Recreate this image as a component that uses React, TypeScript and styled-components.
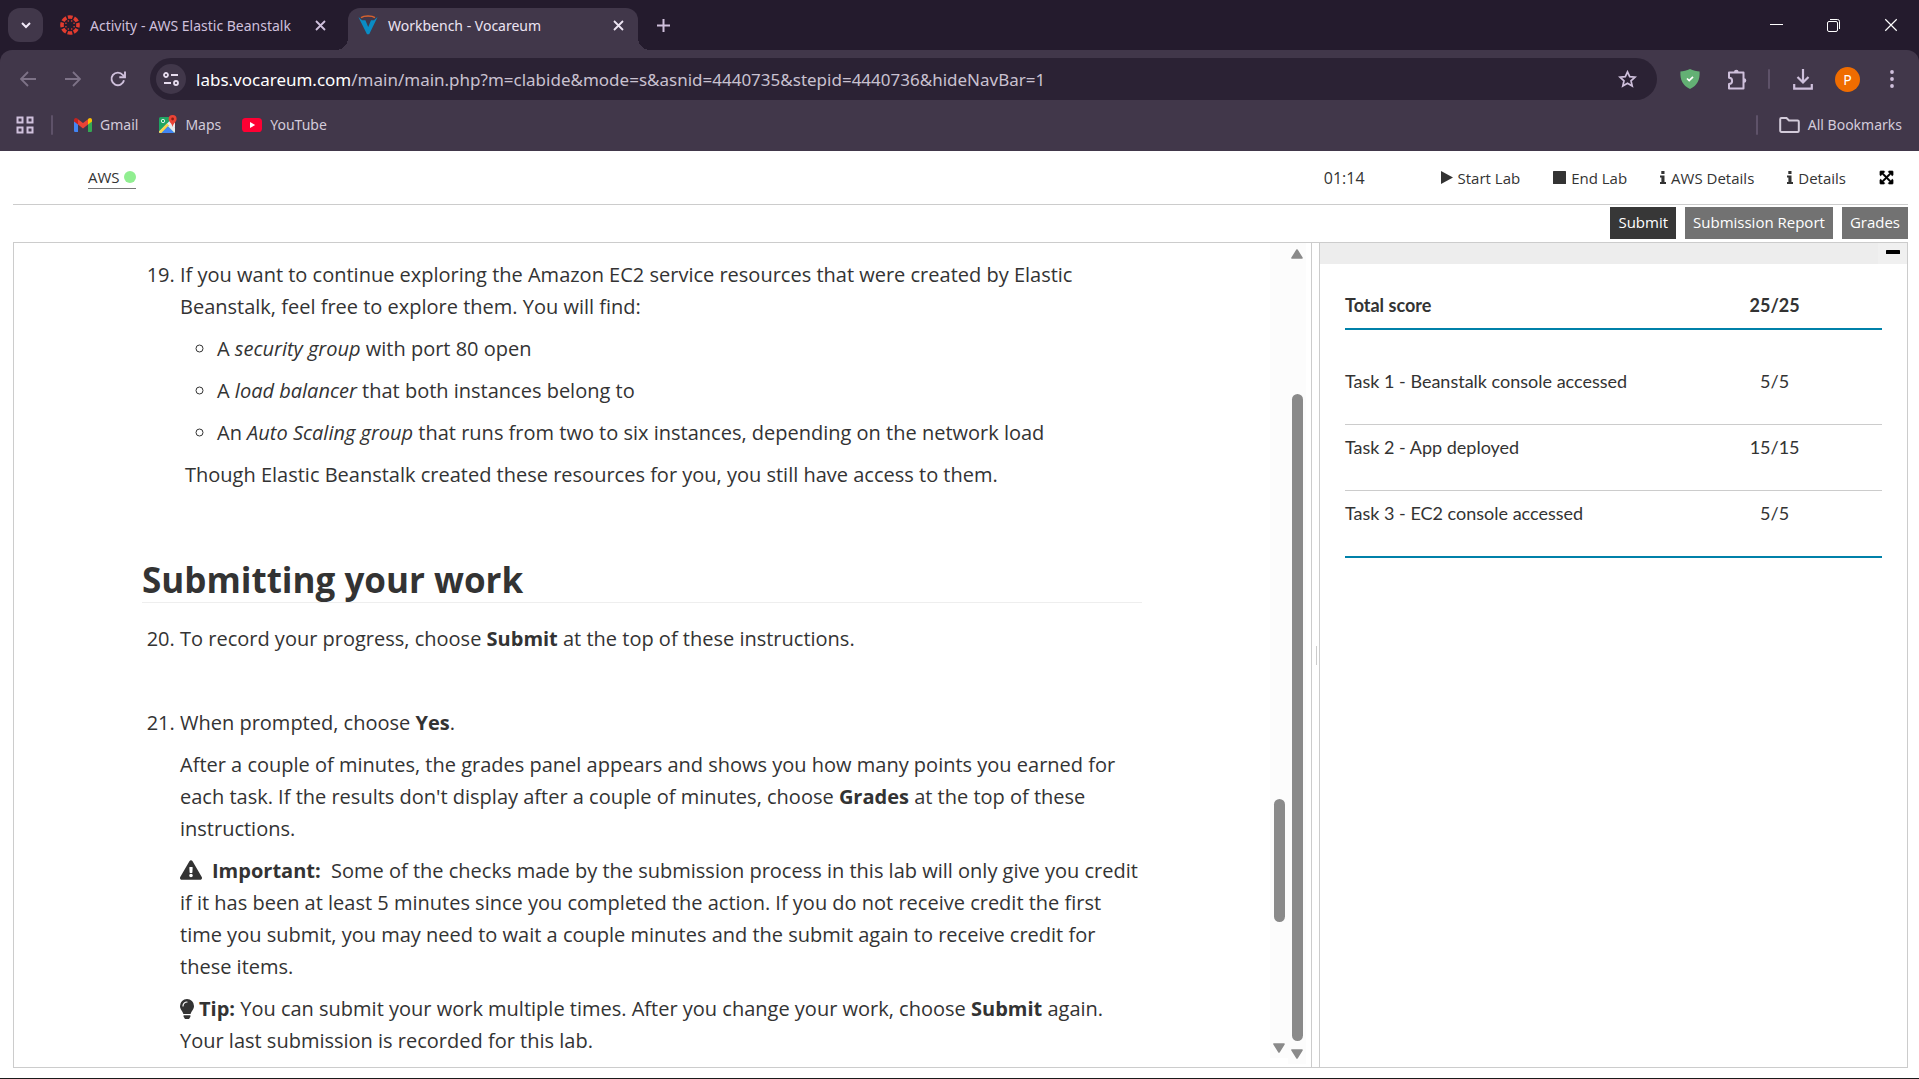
import React from "react";
import styled, { createGlobalStyle, css } from "styled-components";
import { FaExpandArrowsAlt, FaExclamationTriangle } from "react-icons/fa";

const uiFont = `"Open Sans", "Noto Sans", sans-serif`;

const GlobalStyle = createGlobalStyle`
  *, *::before, *::after { box-sizing: border-box; }
  body { margin: 0; background: #fff; font-family: ${uiFont}; color: #333; }
  button { border: 0; padding: 0; background: none; color: inherit; font: inherit; cursor: pointer; }
  svg { display: block; flex: none; }
  h2, p, ol, ul { margin: 0; padding: 0; }
`;

const Page = styled.div`
  display: flex;
  flex-direction: column;
  height: 100vh;
  overflow: hidden;
  border-bottom: 1px solid #1b1b1b;
`;

/* ---------- Browser chrome ---------- */

const Chrome = styled.header`
  flex: none;
  background: #241b2d;
  color: #cfc0dc;
  font-family: "Noto Sans", sans-serif;
`;

const TabStrip = styled.div`
  display: flex;
  height: 50px;
  padding: 8px 0 0 8px;
`;

const TabSearch = styled.button`
  display: grid;
  place-items: center;
  width: 35px;
  height: 34px;
  margin-right: 7px;
  border-radius: 12px;
  background: #41374a;
  color: #f2e9f8;
`;

const Tab = styled.div<{ $active?: boolean }>`
  position: relative;
  display: flex;
  align-items: center;
  width: ${(p) => (p.$active ? 290 : 298)}px;
  height: 42px;
  padding: 0 ${(p) => (p.$active ? 14 : 22)}px 8px 10px;
  border-radius: 12px 12px 0 0;
  font-size: 14px;
  ${(p) =>
    p.$active &&
    css`
      background: #41374a;
      color: #ece4f2;
      &::before,
      &::after {
        content: "";
        position: absolute;
        bottom: 0;
        width: 12px;
        height: 12px;
      }
      &::before {
        left: -12px;
        background: radial-gradient(circle at 0 0, transparent 12px, #41374a 12px);
      }
      &::after {
        right: -12px;
        background: radial-gradient(circle at 100% 0, transparent 12px, #41374a 12px);
      }
    `}
`;

const TabTitle = styled.span`
  flex: 1;
  margin-left: 10px;
  white-space: nowrap;
`;

const NewTab = styled.button`
  width: 44px;
  height: 34px;
  display: grid;
  place-items: center;
  margin-left: 3px;
`;

const WindowControls = styled.div`
  display: flex;
  margin: -8px 0 0 auto;
  color: #fff;
`;

const WindowButton = styled.button`
  display: grid;
  place-items: center;
  width: 57px;
  height: 50px;
`;

const Toolbar = styled.div`
  display: flex;
  align-items: center;
  height: 58px;
  padding: 0 7px 0 8px;
  border-radius: 12px 12px 0 0;
  background: #41374a;
`;

const IconButton = styled.button<{ $w?: number; $dim?: boolean }>`
  display: grid;
  place-items: center;
  flex: none;
  width: ${(p) => p.$w ?? 39}px;
  height: 40px;
  color: ${(p) => (p.$dim ? "#7d7287" : "#cfc0dc")};
`;

const Omnibox = styled.div`
  display: flex;
  align-items: center;
  flex: 1;
  height: 42px;
  margin: 0 14px 0 13px;
  padding: 0 9px 0 6px;
  border-radius: 21px;
  background: #2b2234;
`;

const SiteInfo = styled.button`
  display: grid;
  place-items: center;
  width: 30px;
  height: 30px;
  border-radius: 50%;
  background: #41374a;
  color: #e6dcee;
`;

const Url = styled.div`
  flex: 1;
  margin-left: 10px;
  font-size: 17px;
  white-space: nowrap;
  color: #c9c1d0;
  span { color: #fff; }
`;

const Divider = styled.span<{ $before?: number; $after?: number }>`
  flex: none;
  width: 2px;
  height: 20px;
  margin: 0 ${(p) => p.$after ?? 0}px 0 ${(p) => p.$before ?? 0}px;
  border-radius: 1px;
  background: #5e5269;
`;

const Avatar = styled.button`
  width: 25px;
  height: 25px;
  margin: 0 12px 0 11px;
  border-radius: 50%;
  background: #ef6c00;
  color: #fff;
  font-size: 14px;
  line-height: 25px;
`;

const BookmarksBar = styled.nav`
  display: flex;
  align-items: center;
  height: 43px;
  padding: 0 17px 10px 16px;
  background: #41374a;
`;

const Bookmark = styled.a`
  display: flex;
  align-items: center;
  gap: 8px;
  margin-left: 21px;
  color: #d3cbda;
  font-size: 14px;
  text-decoration: none;
  white-space: nowrap;
`;

const Push = styled.span`
  margin-left: auto;
`;

/* ---------- Lab header ---------- */

const LabBar = styled.div`
  display: flex;
  align-items: center;
  flex: none;
  height: 54px;
  margin: 0 11px 0 13px;
  padding: 0 14px 0 75px;
  border-bottom: 1px solid #ccc;
  font-size: 15px;
`;

const AwsLink = styled.a`
  display: flex;
  align-items: center;
  gap: 4px;
  height: 22px;
  border-bottom: 1px solid #777;
  color: #333;
  text-decoration: none;
`;

const StatusDot = styled.span`
  width: 12px;
  height: 12px;
  border-radius: 50%;
  background: #90ee90;
`;

const LabActions = styled.div`
  display: flex;
  align-items: center;
  gap: 33px;
  margin-left: auto;
`;

const Timer = styled.span`
  margin-right: 43px;
  font-size: 16px;
`;

const LabAction = styled.button`
  display: flex;
  align-items: center;
  gap: 5px;
`;

const SubmitBar = styled.div`
  display: flex;
  justify-content: flex-end;
  flex: none;
  gap: 9px;
  margin: 2px 11px 3px 13px;
`;

const SubmitButton = styled.button<{ $dark?: boolean }>`
  height: 32px;
  padding: 0 8px 2px;
  background: ${(p) => (p.$dark ? "#373737" : "#727272")};
  color: #fff;
  font-size: 15px;
`;

/* ---------- Split view ---------- */

const Split = styled.main`
  display: grid;
  grid-template-columns: minmax(0, 1299fr) 7px minmax(0, 589fr);
  flex: 1;
  min-height: 0;
  margin: 0 11px 10px 13px;
  border: 1px solid #ccc;
  border-width: 1px 0;
`;

const LeftPane = styled.section`
  display: flex;
  min-height: 0;
  padding-right: 5px;
  border: 1px solid #ccc;
  border-width: 0 1px;
`;

const Reader = styled.div`
  flex: 1;
  min-width: 0;
  overflow: hidden;
`;

const Document = styled.article`
  max-width: 1000px;
  margin: 0 auto;
  padding-top: 16px;
  font-size: 20px;
  line-height: 32px;
  color: #333;
`;

const Steps = styled.ol`
  padding-left: 38px;
  > li > * + * { margin-top: 10px; }
  > li + li { margin-top: 52px; }
`;

const Bullets = styled.ul`
  padding-left: 37px;
  list-style: circle;
  li + li { margin-top: 10px; }
`;

const Indented = styled.p`
  padding-left: 5px;
`;

const Heading = styled.h2`
  margin: 68px 0 20px;
  padding-bottom: 2px;
  border-bottom: 1px solid #eee;
  font-size: 35px;
  line-height: 41px;
  font-weight: 700;
`;

const InlineIcon = styled.span<{ $gap: number }>`
  display: inline-block;
  margin-right: ${(p) => p.$gap}px;
  vertical-align: -3px;
`;

const ScrollTrack = styled.div<{ $end: number }>`
  display: flex;
  flex-direction: column;
  align-items: center;
  flex: none;
  width: 18px;
  margin-bottom: ${(p) => p.$end}px;
  padding: 6px 0 5px;
  background: #fcfcfc;
`;

const ScrollSpace = styled.span<{ $grow: number }>`
  flex: ${(p) => p.$grow} 1 0;
`;

const ScrollThumb = styled.span<{ $grow: number }>`
  flex: ${(p) => p.$grow} 1 0;
  width: 11px;
  border-radius: 6px;
  background: #8a8a8a;
`;

const Splitter = styled.div`
  display: flex;
  align-items: center;
  justify-content: flex-end;
  padding-right: 2px;
  &::before {
    content: "";
    width: 1px;
    height: 19px;
    background: #ccc;
  }
`;

const RightPane = styled.aside`
  border: 1px solid #ccc;
  border-width: 0 1px;
`;

const PanelHeader = styled.div`
  display: flex;
  justify-content: flex-end;
  height: 21px;
  background: #ededed;
`;

const Collapse = styled.button`
  display: grid;
  justify-content: center;
  align-content: start;
  width: 29px;
  height: 21px;
  padding-top: 7px;
  background: #f0f0f0;
  color: #000;
`;

const Scores = styled.table`
  width: calc(100% - 50px);
  margin: 0 25px;
  border-collapse: collapse;
  table-layout: fixed;
  border-bottom: 2px solid #0081a9;
  font-family: Lato, sans-serif;
  font-size: 18px;
  line-height: 24px;
  color: #333;
  th, td { padding: 0; text-align: left; vertical-align: top; }
  th:nth-child(2), td:nth-child(2) { width: 40%; text-align: center; }
  thead th {
    height: 65px;
    padding-top: 29px;
    border-bottom: 2px solid #0081a9;
    font-weight: 700;
  }
  tbody td { height: 66px; padding-top: 10px; border-top: 1px solid #ccc; }
  tbody tr:first-child td { height: 95px; padding-top: 39px; border-top: 0; }
  tbody tr:last-child td { height: 67px; }
`;

/* ---------- Drawings ---------- */

const CanvasLogo = () => (
  <svg width="20" height="20" viewBox="0 0 20 20">
    <circle cx="10" cy="10" r="8" fill="none" stroke="#e23c2f" strokeWidth="3.6" strokeDasharray="4.7 1.583" strokeDashoffset="2.35" />
    {[0, 1, 2, 3, 4, 5, 6, 7].map((i) => (
      <circle key={i} cx={10 + 4.4 * Math.cos(((i * 45 + 22.5) * Math.PI) / 180)} cy={10 + 4.4 * Math.sin(((i * 45 + 22.5) * Math.PI) / 180)} r="0.8" fill="#e23c2f" />
    ))}
  </svg>
);

const VocareumLogo = () => (
  <svg width="20" height="20" viewBox="0 0 20 20">
    <path d="M.5 2 4 5.3H7.4L10.2 12 13 5.3H16L19.5 2 18 5.3 11.2 19.3H9L2 5.3Z" fill="#0a8cc4" />
    <path d="M3 2.6C6 .6 14 .6 17 2.6" fill="none" stroke="#d8632f" strokeWidth="1.5" />
  </svg>
);

const Cross = ({ size = 11, w = 1.8 }: { size?: number; w?: number }) => (
  <svg width={size} height={size} viewBox="0 0 11 11" fill="none" stroke="currentColor" strokeWidth={w}>
    <path d="M1 1 10 10M10 1 1 10" />
  </svg>
);

const Arrow = ({ flip }: { flip?: boolean }) => (
  <svg width="16" height="16" viewBox="0 0 16 16" fill="none" stroke="currentColor" strokeWidth="1.8">
    <path d={flip ? "M0 8H14.5M8 1 15 8 8 15" : "M16 8H1.5M8 1 1 8 8 15"} />
  </svg>
);

const Triangle = ({ down }: { down?: boolean }) => (
  <svg width="12" height="10" viewBox="0 0 12 10">
    <path d={down ? "M1 1H11L6 9Z" : "M1 9H11L6 1Z"} fill="#8a8a8a" stroke="#8a8a8a" strokeWidth="1.6" strokeLinejoin="round" />
  </svg>
);

const PlayIcon = () => (
  <svg width="12" height="13" viewBox="0 0 12 13"><path d="M0 0 12 6.5 0 13Z" fill="currentColor" /></svg>
);

const StopIcon = () => (
  <svg width="13" height="13" viewBox="0 0 13 13"><rect width="13" height="13" rx=".5" fill="currentColor" /></svg>
);

const InfoIcon = () => (
  <svg width="6" height="13" viewBox="0 0 6 13">
    <path d="M1.3 0H4.5V3H1.3ZM0 4.5H4.5V11H6V13H0V11H1.4V6.5H0Z" fill="currentColor" />
  </svg>
);

const GmailLogo = () => (
  <svg width="18" height="14" viewBox="0 0 18 14">
    <path d="M0 2.4V12.7C0 13.4.6 14 1.3 14H4V5.5Z" fill="#4285f4" />
    <path d="M14 5.5V14H16.7C17.4 14 18 13.4 18 12.7V2.4Z" fill="#34a853" />
    <path d="M14 1.2V6.6L18 3.6V2C18 .1 15.9-.6 14.6.6Z" fill="#fbbc04" />
    <path d="M4 6.6V1.2L9 5 14 1.2V6.6L9 10.4Z" fill="#ea4335" />
    <path d="M0 2V3.6L4 6.6V1.2L3.4.6C2.1-.6 0 .1 0 2Z" fill="#c5221f" />
  </svg>
);

const MapsLogo = () => (
  <svg width="18" height="19" viewBox="0 0 18 19">
    <rect x="0" y="2" width="16" height="16" rx="1.6" fill="#1fa463" />
    <path d="M0 16.5 12.5 4 16 7V13L9 10 2 18H1.5C.6 18 0 17.4 0 16.5Z" fill="#e8eaed" />
    <path d="M0 16.5 8 8.5 10 10.5 2.5 18H1.5C.6 18 0 17.4 0 16.5Z" fill="#fbd14b" />
    <path d="M2.5 18 9 11.3 15.5 18Z" fill="#4285f4" />
    <path d="M10 10.5 12 8.5 16 13V16.4C16 17 15.8 17.5 15.4 17.7L9 11.3Z" fill="#e8eaed" />
    <circle cx="4" cy="6" r="1.7" fill="none" stroke="#d5f0e0" strokeWidth="1" />
    <path d="M13.6 0a4 4 0 0 0-4 4c0 3 3.4 4 4 8 .6-4 4-5 4-8a4 4 0 0 0-4-4Z" fill="#ea4335" />
    <circle cx="13.6" cy="4" r="1.4" fill="#8f1d14" />
  </svg>
);

const YouTubeLogo = () => (
  <svg width="20" height="14" viewBox="0 0 20 14">
    <rect width="20" height="14" rx="3.6" fill="#ff0033" />
    <path d="M8 4 13.2 7 8 10Z" fill="#fff" />
  </svg>
);

const Bulb = () => (
  <svg width="14" height="20" viewBox="0 0 14 20">
    <path d="M7 0a7 7 0 0 0-7 7c0 3.6 2.6 5 3.4 8h7.2C11.4 12 14 10.6 14 7a7 7 0 0 0-7-7Z" fill="#333" />
    <path d="M3 7a4 4 0 0 1 4-4" fill="none" stroke="#fff" strokeWidth="1.2" strokeLinecap="round" />
    <path d="M3.6 16.2h6.8v1.6L9 20H5L3.6 17.8Z" fill="#333" />
  </svg>
);

const tasks = [
  ["Task 1 - Beanstalk console accessed", "5/5"],
  ["Task 2 - App deployed", "15/15"],
  ["Task 3 - EC2 console accessed", "5/5"],
];

export default function App() {
  return (
    <>
      <GlobalStyle />
      <Page>
        <Chrome>
          <TabStrip>
            <TabSearch aria-label="Search tabs">
              <svg width="10" height="7" viewBox="0 0 10 7" fill="none" stroke="currentColor" strokeWidth="2"><path d="M1 1 5 5 9 1" /></svg>
            </TabSearch>
            <Tab>
              <CanvasLogo />
              <TabTitle>Activity - AWS Elastic Beanstalk</TabTitle>
              <button aria-label="Close tab"><Cross /></button>
            </Tab>
            <Tab $active>
              <VocareumLogo />
              <TabTitle>Workbench - Vocareum</TabTitle>
              <button aria-label="Close tab"><Cross /></button>
            </Tab>
            <NewTab aria-label="New tab">
              <svg width="13" height="13" viewBox="0 0 13 13" stroke="currentColor" strokeWidth="2"><path d="M6.5 0V13M0 6.5H13" /></svg>
            </NewTab>
            <WindowControls>
              <WindowButton aria-label="Minimize">
                <svg width="13" height="13" viewBox="0 0 13 13"><path d="M0 5.5H13" stroke="currentColor" /></svg>
              </WindowButton>
              <WindowButton aria-label="Restore">
                <svg width="13" height="13" viewBox="0 0 13 13" fill="none" stroke="currentColor"><rect x=".5" y="2.5" width="10" height="10" rx="1.5" /><path d="M3 .5H10.5A2 2 0 0 1 12.5 2.5V10" /></svg>
              </WindowButton>
              <WindowButton aria-label="Close window"><Cross size={14} w={0.9} /></WindowButton>
            </WindowControls>
          </TabStrip>
          <Toolbar>
            <IconButton $dim aria-label="Back"><Arrow /></IconButton>
            <IconButton $w={51} $dim aria-label="Forward"><Arrow flip /></IconButton>
            <IconButton aria-label="Reload">
              <svg width="16" height="16" viewBox="0 0 16 16" fill="none" stroke="currentColor" strokeWidth="1.9"><path d="M14 9.3A6.3 6.3 0 1 1 12.8 4L14.6 6" /><path d="M15 .5V6.2H9.3" /></svg>
            </IconButton>
            <Omnibox>
              <SiteInfo aria-label="View site information">
                <svg width="16" height="14" viewBox="0 0 16 14" fill="none" stroke="currentColor" strokeWidth="1.8"><circle cx="3" cy="3" r="2" /><path d="M8 3H15M1 11H8" /><circle cx="13" cy="11" r="2" /></svg>
              </SiteInfo>
              <Url><span>labs.vocareum.com</span>/main/main.php?m=clabide&amp;mode=s&amp;asnid=4440735&amp;stepid=4440736&amp;hideNavBar=1</Url>
              <IconButton $w={41} aria-label="Bookmark this tab">
                <svg width="19" height="18" viewBox="0 0 19 18" fill="none" stroke="currentColor" strokeWidth="1.7"><path d="M9.5 1.9 11.7 6.7 17 7.2 13 10.8 14.2 16 9.5 13.2 4.8 16 6 10.8 2 7.2 7.3 6.7Z" /></svg>
              </IconButton>
            </Omnibox>
            <IconButton $w={38} aria-label="Shield extension">
              <svg width="20" height="20" viewBox="0 0 20 20"><path d="M10 0C7 1.8 3 2.2.4 2.6 0 11 2.6 16.5 10 20 17.4 16.5 20 11 19.6 2.6 17 2.2 13 1.8 10 0Z" fill="#63b074" /><path d="M7 9.5 9.2 11.6 13 7.8" fill="none" stroke="#fff" strokeWidth="1.7" /></svg>
            </IconButton>
            <IconButton $w={57} aria-label="Extensions">
              <svg width="21" height="21" viewBox="0 0 21 21" fill="none" stroke="currentColor" strokeWidth="2">
                <path d="M2 3.5H16.5V19.5H2V15A3 3 0 0 0 2 8.8Z" strokeLinejoin="round" />
                <path d="M7 3A2.3 2.3 0 0 1 11.6 3ZM17 9.2A2.3 2.3 0 0 1 17 13.8Z" fill="currentColor" stroke="none" />
              </svg>
            </IconButton>
            <Divider $before={2} $after={11} />
            <IconButton $w={43} aria-label="Downloads">
              <svg width="20" height="21" viewBox="0 0 20 21" fill="none" stroke="currentColor" strokeWidth="2.2"><path d="M10 0V13M4.5 8 10 13.5 15.5 8M1.2 15V19.6H18.8V15" /></svg>
            </IconButton>
            <Avatar aria-label="Profile">P</Avatar>
            <IconButton $w={40} aria-label="Menu">
              <svg width="4" height="18" viewBox="0 0 4 18" fill="currentColor"><circle cx="2" cy="2" r="1.9" /><circle cx="2" cy="9" r="1.9" /><circle cx="2" cy="16" r="1.9" /></svg>
            </IconButton>
          </Toolbar>
          <BookmarksBar>
            <button aria-label="Tab groups">
              <svg width="18" height="18" viewBox="0 0 18 18" fill="none" stroke="currentColor" strokeWidth="2"><path d="M1.5 1.5H6.5V6.5H1.5ZM11.5 1.5H16.5V6.5H11.5ZM1.5 11.5H6.5V16.5H1.5ZM11.5 11.5H16.5V16.5H11.5Z" /></svg>
            </button>
            <Divider $before={17} />
            <Bookmark href="#gmail"><GmailLogo />Gmail</Bookmark>
            <Bookmark href="#maps"><MapsLogo />Maps</Bookmark>
            <Bookmark href="#youtube"><YouTubeLogo />YouTube</Bookmark>
            <Push />
            <Divider />
            <Bookmark href="#all">
              <svg width="21" height="16" viewBox="0 0 21 16" fill="none" stroke="currentColor" strokeWidth="2"><path d="M1.2 2.2A1.2 1.2 0 0 1 2.4 1H7.5L10 3.5H18.6A1.2 1.2 0 0 1 19.8 4.7V13.8A1.2 1.2 0 0 1 18.6 15H2.4A1.2 1.2 0 0 1 1.2 13.8Z" /></svg>
              All Bookmarks
            </Bookmark>
          </BookmarksBar>
        </Chrome>

        <LabBar>
          <AwsLink href="#aws">AWS <StatusDot /></AwsLink>
          <LabActions>
            <Timer>01:14</Timer>
            <LabAction><PlayIcon />Start Lab</LabAction>
            <LabAction><StopIcon />End Lab</LabAction>
            <LabAction><InfoIcon />AWS Details</LabAction>
            <LabAction><InfoIcon />Details</LabAction>
            <LabAction aria-label="Full screen"><FaExpandArrowsAlt size={15} color="#000" stroke="#000" strokeWidth={20} /></LabAction>
          </LabActions>
        </LabBar>
        <SubmitBar>
          <SubmitButton $dark>Submit</SubmitButton>
          <SubmitButton>Submission Report</SubmitButton>
          <SubmitButton>Grades</SubmitButton>
        </SubmitBar>

        <Split>
          <LeftPane>
            <Reader>
              <Document>
                <Steps start={19}>
                  <li>
                    <p>If you want to continue exploring the Amazon EC2 service resources that were created by Elastic Beanstalk, feel free to explore them. You will find:</p>
                    <Bullets>
                      <li>A <em>security group</em> with port 80 open</li>
                      <li>A <em>load balancer</em> that both instances belong to</li>
                      <li>An <em>Auto Scaling group</em> that runs from two to six instances, depending on the network load</li>
                    </Bullets>
                    <Indented>Though Elastic Beanstalk created these resources for you, you still have access to them.</Indented>
                  </li>
                </Steps>
                <Heading>Submitting your work</Heading>
                <Steps start={20}>
                  <li>
                    <p>To record your progress, choose <strong>Submit</strong> at the top of these instructions.</p>
                  </li>
                  <li>
                    <p>When prompted, choose <strong>Yes</strong>.</p>
                    <p>After a couple of minutes, the grades panel appears and shows you how many points you earned for each task. If the results don't display after a couple of minutes, choose <strong>Grades</strong> at the top of these instructions.</p>
                    <p>
                      <InlineIcon $gap={10}><FaExclamationTriangle size={22} /></InlineIcon>
                      <strong>Important:</strong>&nbsp; Some of the checks made by the submission process in this lab will only give you credit if it has been at least 5 minutes since you completed the action. If you do not receive credit the first time you submit, you may need to wait a couple minutes and the submit again to receive credit for these items.
                    </p>
                    <p>
                      <InlineIcon $gap={5}><Bulb /></InlineIcon>
                      <strong>Tip:</strong> You can submit your work multiple times. After you change your work, choose <strong>Submit</strong> again. Your last submission is recorded for this lab.
                    </p>
                  </li>
                </Steps>
              </Document>
            </Reader>
            <ScrollTrack $end={9}>
              <ScrollSpace $grow={550} />
              <ScrollThumb $grow={123} />
              <ScrollSpace $grow={121} />
              <Triangle down />
            </ScrollTrack>
            <ScrollTrack $end={3}>
              <Triangle />
              <ScrollSpace $grow={135} />
              <ScrollThumb $grow={647} />
              <ScrollSpace $grow={8} />
              <Triangle down />
            </ScrollTrack>
          </LeftPane>
          <Splitter />
          <RightPane>
            <PanelHeader>
              <Collapse aria-label="Collapse panel">
                <svg width="14" height="4" viewBox="0 0 14 4"><rect width="14" height="4" rx=".6" fill="currentColor" /></svg>
              </Collapse>
            </PanelHeader>
            <Scores>
              <thead>
                <tr><th scope="col">Total score</th><th scope="col">25/25</th></tr>
              </thead>
              <tbody>
                {tasks.map(([name, score]) => (
                  <tr key={name}><td>{name}</td><td>{score}</td></tr>
                ))}
              </tbody>
            </Scores>
          </RightPane>
        </Split>
      </Page>
    </>
  );
}
